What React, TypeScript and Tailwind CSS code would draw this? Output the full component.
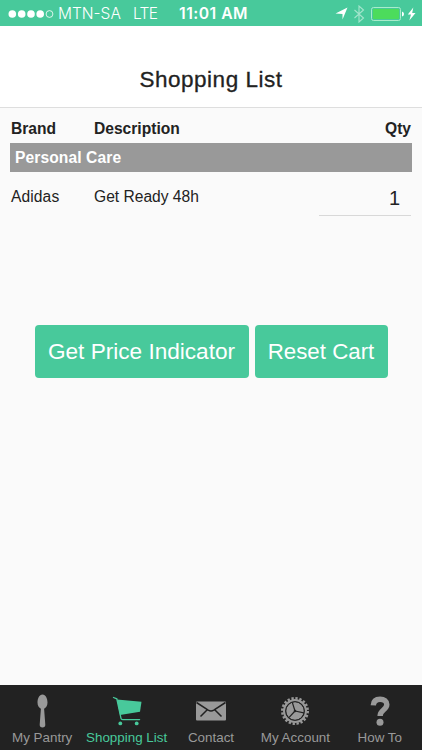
import type { ReactNode } from 'react';

type Tab = {
  label: string;
  icon: ReactNode;
  active?: boolean;
};

function SpoonIcon() {
  return (
    <svg width="12" height="36" viewBox="0 0 12 36" fill="currentColor">
      <path d="M6.500 1.500C9.700 1.500 11.500 5.500 11.500 9.500c0 3.400-1.500 5.300-3.400 6.200l1.200 15.800c.2 2-1 3-2.800 3s-3-1-2.800-3l1.200-15.800c-1.900-.9-3.400-2.800-3.400-6.200C1.500 5.500 3.300 1.500 6.500 1.500z" />
    </svg>
  );
}

function CartIcon() {
  return (
    <svg width="30" height="30" viewBox="0 0 30 30" fill="none">
      <path d="M1.500 1.500l3.300 1.300 4.200 19.500q.3 1.300 1.600 1.300h17" stroke="currentColor" strokeWidth="1.300" strokeLinecap="round" />
      <path d="M5 3.500l24.500 2.200-1.500 10-20 3.200z" fill="currentColor" />
      <circle cx="8.300" cy="27.400" r="1.900" fill="currentColor" />
      <circle cx="24.700" cy="27.400" r="1.900" fill="currentColor" />
    </svg>
  );
}

function MailIcon() {
  return (
    <svg width="32" height="20" viewBox="0 0 32 20">
      <rect x="1" y="0.500" width="30" height="19" rx="1" fill="currentColor" />
      <path d="M1.500 1.500l11.700 7.700q2.800 1.600 5.600 0L30.500 1.500M12 9L5.500 15.500M20 9l6.500 6.500" fill="none" stroke="#222" strokeWidth="1.500" />
    </svg>
  );
}

function GearIcon() {
  return (
    <svg width="28" height="28" viewBox="0 0 28 28">
      <circle cx="14" cy="14" r="12.700" fill="none" stroke="currentColor" strokeWidth="2.600" strokeDasharray="2.300 1.690" />
      <circle cx="14" cy="14" r="10.900" fill="none" stroke="currentColor" strokeWidth="2.200" />
      <circle cx="14" cy="14" r="8.900" fill="currentColor" />
      <circle cx="14" cy="14" r="9.300" fill="none" stroke="#222" strokeWidth="0.900" />
      <path d="M14 14l-2.700-8.600M14 14l8.800 1.900M14 14l-6.100 6.600" stroke="#222" strokeWidth="1.200" />
      <circle cx="14" cy="14" r="1.300" fill="#222" />
    </svg>
  );
}

function HelpIcon() {
  return (
    <svg width="20" height="32" viewBox="0 0 20 32" fill="none">
      <path d="M3.300 10.300C3.500 6.300 6 4.200 10.100 4.200c4 0 6.700 2.200 6.700 5.400 0 5.400-6.700 5-6.700 11.500" stroke="currentColor" strokeWidth="5.400" />
      <circle cx="10" cy="27.300" r="3.500" fill="currentColor" />
    </svg>
  );
}

const tabs: Tab[] = [
  { label: 'My Pantry', icon: <SpoonIcon /> },
  { label: 'Shopping List', icon: <CartIcon />, active: true },
  { label: 'Contact', icon: <MailIcon /> },
  { label: 'My Account', icon: <GearIcon /> },
  { label: 'How To', icon: <HelpIcon /> },
];

function StatusBar() {
  return (
    <div className="flex h-[26px] shrink-0 items-center bg-[#48c99b] pl-[8px] pr-[6px] pt-px font-['Inter',sans-serif] text-[15.5px] text-white">
      <svg width="47" height="10" viewBox="0 0 47 10" fill="white">
        <circle cx="4.300" cy="5" r="3.800" />
        <circle cx="13.700" cy="5" r="3.800" />
        <circle cx="23" cy="5" r="3.800" />
        <circle cx="32.200" cy="5" r="3.800" />
        <circle cx="41.500" cy="5" r="3.400" fill="none" stroke="white" strokeWidth="0.800" />
      </svg>
      <span className="ml-[3px] w-[75px] whitespace-nowrap font-light">MTN-SA</span>
      <span className="w-[46px] font-light tracking-[-0.700px]">LTE</span>
      <span className="whitespace-nowrap text-[15.7px] font-semibold tracking-[0.500px]">11:01 AM</span>
      <div className="ml-auto flex items-center">
        <svg width="13" height="13" viewBox="0 0 13 13" fill="white">
          <path d="M12.500.5L7.500 12.500V7L.5 6.500z" />
        </svg>
        <svg className="ml-[5px]" width="12" height="18" viewBox="0 0 12 18" fill="none" stroke="#a5e5cd" strokeWidth="1.100">
          <path d="M1.500 5l9 8L6 17V1l4.500 4-9 8" />
        </svg>
        <svg className="ml-[6px]" width="34" height="14" viewBox="0 0 34 14">
          <rect x="0.500" y="0.500" width="29" height="13" rx="2" fill="none" stroke="#a9eccb" />
          <rect x="2" y="2" width="26" height="10" rx="1" fill="#4cdc5c" />
          <path d="M31 4.500q2 .5 2 2.500t-2 2.500z" fill="white" />
        </svg>
        <svg className="ml-[2px]" width="9" height="14" viewBox="0 0 9 14" fill="white">
          <path d="M6.300.5L.8 7.500h3.200L2.300 13.500l6.200-7.500h-3.300z" />
        </svg>
      </div>
    </div>
  );
}

export default function App() {
  return (
    <div className="flex h-[750px] w-[422px] flex-col bg-[#fafafa] font-['Liberation_Sans',Arial,sans-serif] text-[#222]">
      <StatusBar />

      <header className="flex h-[82px] shrink-0 items-center justify-center border-b border-[#dedede] bg-white pt-[28px]">
        <h1 className="text-[22.5px] leading-none tracking-[0.500px] [-webkit-text-stroke:0.300px_currentColor]">Shopping List</h1>
      </header>

      <main className="flex-1 px-[10px]">
        <div className="flex h-[35px] items-center pl-px pr-px pt-[6px] text-[15.6px] font-bold">
          <span className="w-[83px]">Brand</span>
          <span className="flex-1">Description</span>
          <span>Qty</span>
        </div>
        <div className="flex h-[29px] items-center bg-[#999] pl-[5px] text-[15.6px] font-bold tracking-[0.100px] text-white">Personal Care</div>
        <div className="flex h-[44px] pl-px pr-px text-[15.6px]">
          <span className="w-[83px] pt-[13px] tracking-[0.100px]">Adidas</span>
          <span className="flex-1 pt-[13px]">Get Ready 48h</span>
          <input
            readOnly
            value="1"
            className="h-[44px] w-[92px] border-b border-[#d8d8d8] bg-transparent pr-[11px] pt-[9px] text-right text-[20px] outline-none"
          />
        </div>
        <div className="mt-[109px] flex gap-[6px] pl-[24.500px] text-[22.6px] text-white">
          <button className="h-[53px] w-[214px] whitespace-nowrap rounded-[4px] bg-[#48c99b]">Get Price Indicator</button>
          <button className="h-[53px] w-[133px] whitespace-nowrap rounded-[4px] bg-[#48c99b] text-[22.3px]">Reset Cart</button>
        </div>
      </main>

      <nav className="grid h-[65px] shrink-0 grid-cols-5 bg-[#222]">
        {tabs.map(tab => (
          <div
            key={tab.label}
            className={`flex flex-col items-center ${tab.active ? 'text-[#48c99b]' : 'text-[#999]'}`}
          >
            <div className="mt-[8px] flex h-[36px] items-center justify-center">{tab.icon}</div>
            <span className="whitespace-nowrap text-[13.4px] leading-[18px]">{tab.label}</span>
          </div>
        ))}
      </nav>
    </div>
  );
}
